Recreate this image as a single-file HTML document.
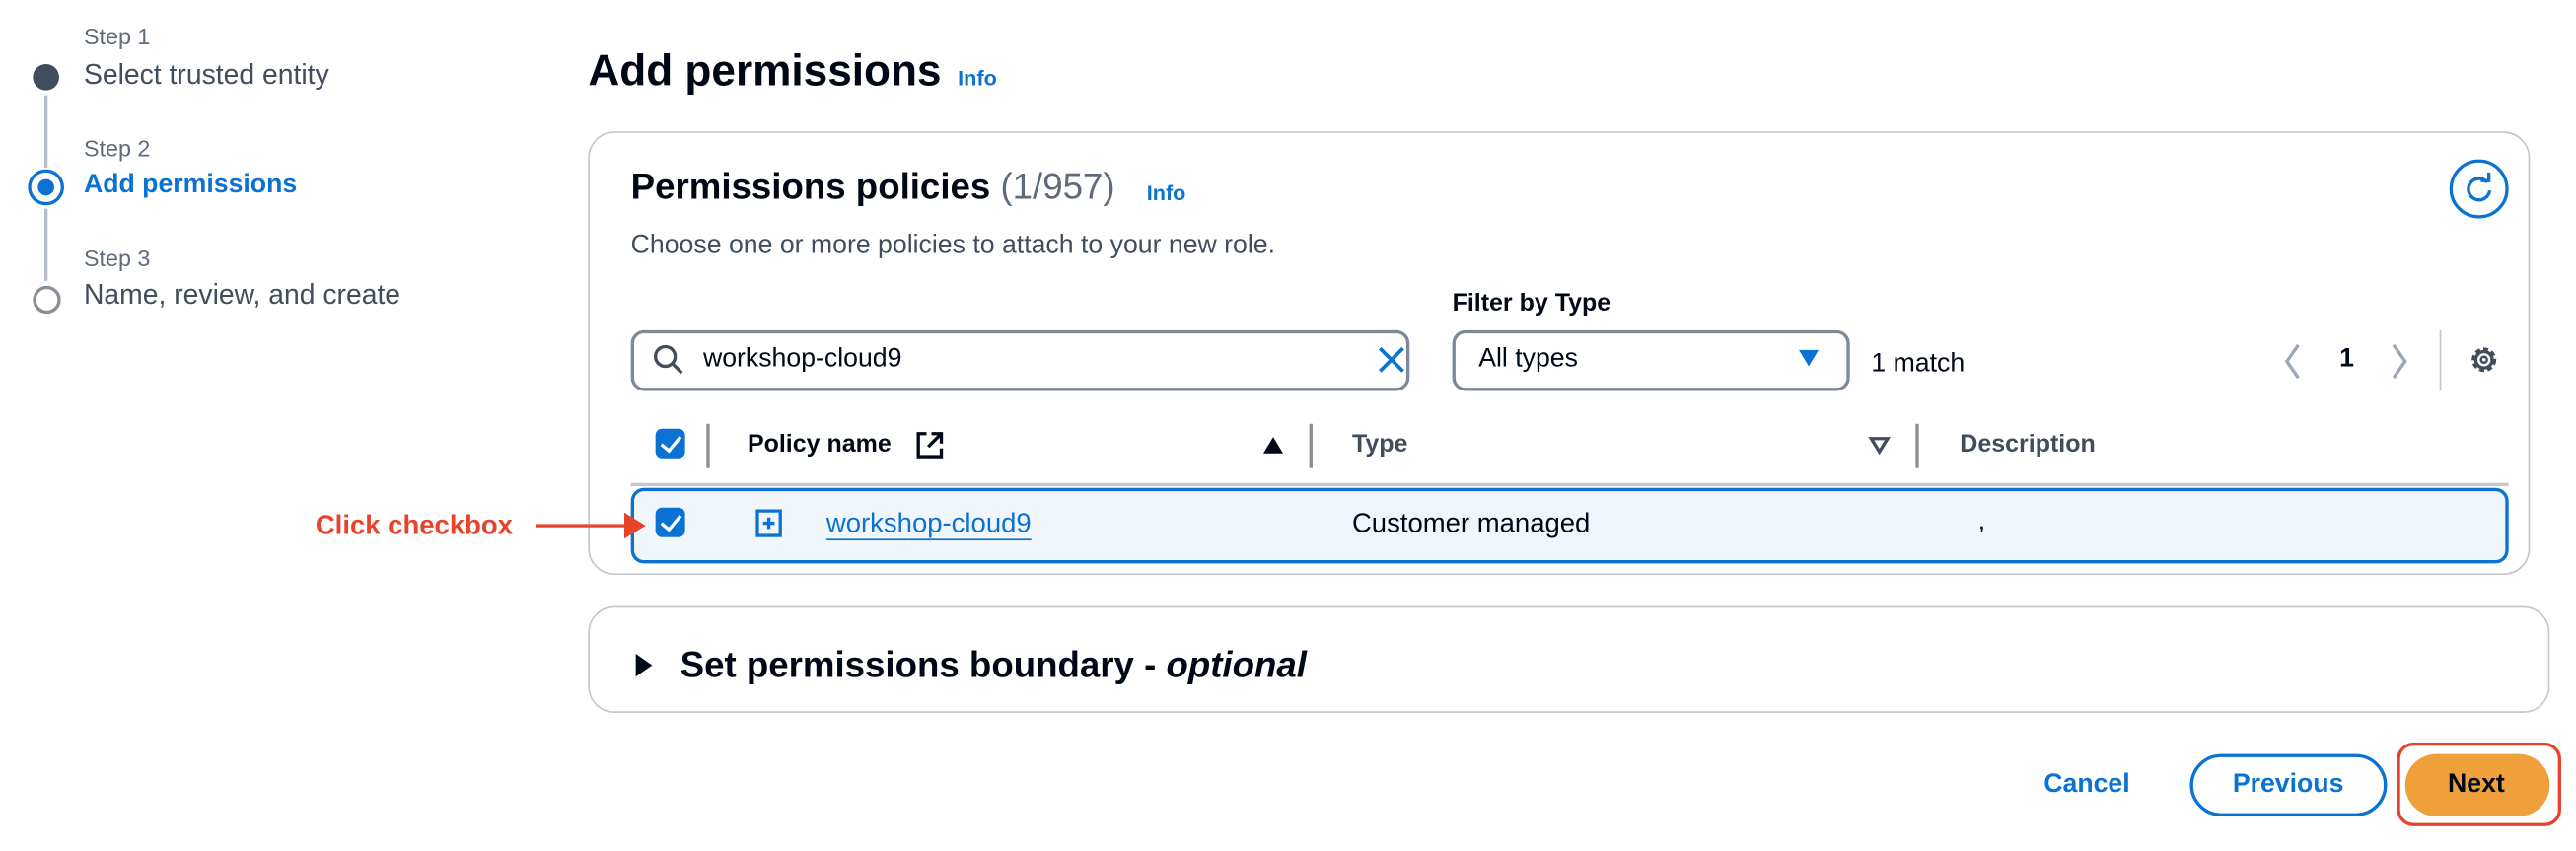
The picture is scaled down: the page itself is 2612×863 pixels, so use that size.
<!DOCTYPE html>
<html><head><meta charset="utf-8"><style>
html,body{margin:0;padding:0;background:#fff;width:2612px;height:862px;overflow:hidden}
#s{position:absolute;left:0;top:0;width:1568px;height:518px;transform:scale(1.6658);transform-origin:0 0;font-family:"Liberation Sans",Arial,sans-serif;color:#000716}
.a{position:absolute;white-space:nowrap}
.g{color:#5f6b7a}
.b{font-weight:bold}
.blue{color:#0972d3}
.cb{position:absolute;width:18px;height:18px;border-radius:4px;background:#0972d3}
.cb:after{content:"";position:absolute;left:6px;top:2px;width:5px;height:10px;border:solid #fff;border-width:0 2px 2px 0;transform:rotate(40deg)}
.vd{position:absolute;width:2px;background:#8c8c94}
</style></head><body><div id="s">
<div class="a g" style="left:51px;top:14px;font-size:14px">Step 1</div>
<div class="a" style="left:51px;top:36px;font-size:17px;color:#414d5c">Select trusted entity</div>
<div class="a" style="left:20px;top:39px;width:16px;height:16px;border-radius:50%;background:#414d5c"></div>
<div class="a" style="left:27px;top:58px;width:2px;height:44px;background:#b6bec9"></div>
<div class="a g" style="left:51px;top:82px;font-size:14px">Step 2</div>
<div class="a b blue" style="left:51px;top:104px;font-size:16px">Add permissions</div>
<div class="a" style="left:17px;top:103px;width:18px;height:18px;border-radius:50%;border:2px solid #0972d3"></div>
<div class="a" style="left:23px;top:109px;width:10px;height:10px;border-radius:50%;background:#0972d3"></div>
<div class="a" style="left:27px;top:127px;width:2px;height:44px;background:#b6bec9"></div>
<div class="a g" style="left:51px;top:149px;font-size:14px">Step 3</div>
<div class="a" style="left:51px;top:170px;font-size:17px;color:#414d5c">Name, review, and create</div>
<div class="a" style="left:20px;top:174px;width:13px;height:13px;border-radius:50%;border:2px solid #8c8c94"></div>
<div class="a b" style="left:358px;top:28px;font-size:26.5px">Add permissions</div>
<div class="a b blue" style="left:583px;top:40px;font-size:13px">Info</div>
<div class="a" style="left:358px;top:80px;width:1180px;height:268px;border:1px solid #c6c6cd;border-radius:16px"></div>
<div class="a b" style="left:384px;top:101px;font-size:22px">Permissions policies <span style="font-weight:normal;color:#5f6b7a">(1/957)</span></div>
<div class="a b blue" style="left:698px;top:110px;font-size:13px">Info</div>
<div class="a" style="left:1491px;top:97px;width:32px;height:32px;border-radius:50%;border:2px solid #0972d3"></div>
<svg class="a" style="left:1496px;top:102px" width="26" height="26" viewBox="0 0 26 26"><path d="M18 9 A6.5 6.5 0 1 0 19.5 14" fill="none" stroke="#0972d3" stroke-width="2"/><path d="M14 8 L19 8 L19 3" fill="none" stroke="#0972d3" stroke-width="2"/></svg>
<div class="a" style="left:384px;top:141px;font-size:16px;color:#414d5c">Choose one or more policies to attach to your new role.</div>
<div class="a b" style="left:884px;top:176px;font-size:15px">Filter by Type</div>
<div class="a" style="left:384px;top:201px;width:470px;height:33px;border:2px solid #7d8998;border-radius:8px"></div>
<svg class="a" style="left:397px;top:209px" width="20" height="20"><circle cx="8" cy="8" r="6" fill="none" stroke="#414d5c" stroke-width="2"/><path d="M12.5 12.5 L18 18" stroke="#414d5c" stroke-width="2"/></svg>
<div class="a" style="left:428px;top:210px;font-size:16px">workshop-cloud9</div>
<svg class="a" style="left:838px;top:210px" width="18" height="18"><path d="M2 2L16 16M16 2L2 16" stroke="#0972d3" stroke-width="2.2"/></svg>
<div class="a" style="left:884px;top:201px;width:238px;height:33px;border:2px solid #7d8998;border-radius:8px"></div>
<div class="a" style="left:900px;top:210px;font-size:16px">All types</div>
<svg class="a" style="left:1094px;top:212px" width="14" height="12"><path d="M1 1H13L7 11Z" fill="#0972d3"/></svg>
<div class="a" style="left:1139px;top:213px;font-size:16px">1 match</div>
<svg class="a" style="left:1388px;top:208px" width="14" height="24"><path d="M11 2L4 12L11 22" fill="none" stroke="#9ba7b6" stroke-width="2"/></svg>
<div class="a b" style="left:1424px;top:210px;font-size:16px">1</div>
<svg class="a" style="left:1454px;top:208px" width="14" height="24"><path d="M3 2L10 12L3 22" fill="none" stroke="#9ba7b6" stroke-width="2"/></svg>
<div class="a" style="left:1485px;top:201px;width:1px;height:37px;background:#c6c6cd"></div>
<svg class="a" style="left:1502px;top:209px" width="20" height="20" viewBox="0 0 20 20"><circle cx="10" cy="10" r="6.5" fill="none" stroke="#414d5c" stroke-width="2" stroke-dasharray="3 2"/><circle cx="10" cy="10" r="5" fill="none" stroke="#414d5c" stroke-width="2"/><circle cx="10" cy="10" r="1.8" fill="none" stroke="#414d5c" stroke-width="1.5"/></svg>
<div class="cb" style="left:399px;top:261px"></div>
<div class="vd" style="left:430px;top:258px;height:27px"></div>
<div class="a b" style="left:455px;top:262px;font-size:15px">Policy name</div>
<svg class="a" style="left:557px;top:262px" width="18" height="18"><path d="M7 2H2V16H16V11" fill="none" stroke="#000716" stroke-width="2"/><path d="M10 2H16V8M16 2L8 10" fill="none" stroke="#000716" stroke-width="2"/></svg>
<svg class="a" style="left:768px;top:265px" width="14" height="12"><path d="M7 1L13 11H1Z" fill="#000716"/></svg>
<div class="vd" style="left:797px;top:258px;height:27px"></div>
<div class="a b" style="left:823px;top:262px;font-size:15px;color:#414d5c">Type</div>
<svg class="a" style="left:1137px;top:265px" width="14" height="12"><path d="M2 2H12L7 10Z" fill="none" stroke="#414d5c" stroke-width="2"/></svg>
<div class="vd" style="left:1166px;top:258px;height:27px"></div>
<div class="a b" style="left:1193px;top:262px;font-size:15px;color:#414d5c">Description</div>
<div class="a" style="left:384px;top:294px;width:1143px;height:2px;background:#c6c6cd"></div>
<div class="a" style="left:384px;top:297px;width:1139px;height:42px;border:2px solid #0972d3;border-radius:8px;background:#f0f6fc"></div>
<div class="cb" style="left:399px;top:309px"></div>
<svg class="a" style="left:460px;top:310px" width="16" height="18"><rect x="1" y="1" width="14" height="15" fill="none" stroke="#0972d3" stroke-width="2"/><path d="M8 5V12M4.5 8.5H11.5" stroke="#0972d3" stroke-width="2"/></svg>
<div class="a blue" style="left:503px;top:310px;font-size:16.5px;text-decoration:underline;text-underline-offset:4px">workshop-cloud9</div>
<div class="a" style="left:823px;top:310px;font-size:16.5px">Customer managed</div>
<div class="a" style="left:1204px;top:309px;font-size:16px">,</div>
<div class="a b" style="left:192px;top:311px;font-size:16.5px;color:#e8432a">Click checkbox</div>
<div class="a" style="left:326px;top:319px;width:58px;height:2px;background:#e8432a"></div>
<svg class="a" style="left:380px;top:312px" width="14" height="16"><path d="M0 0L13 8L0 16Z" fill="#e8432a"/></svg>
<div class="a" style="left:358px;top:369px;width:1192px;height:63px;border:1px solid #c6c6cd;border-radius:16px"></div>
<svg class="a" style="left:386px;top:397px" width="12" height="16"><path d="M1 1L11 8L1 15Z" fill="#000716"/></svg>
<div class="a b" style="left:414px;top:392px;font-size:22px">Set permissions boundary - <i>optional</i></div>
<div class="a b blue" style="left:1244px;top:469px;font-size:16px">Cancel</div>
<div class="a" style="left:1333px;top:459px;width:116px;height:34px;border:2px solid #0972d3;border-radius:20px"></div>
<div class="a b blue" style="left:1359px;top:469px;font-size:16px">Previous</div>
<div class="a" style="left:1459px;top:452px;width:96px;height:47px;border:2px solid #e8432a;border-radius:10px"></div>
<div class="a" style="left:1464px;top:459px;width:88px;height:38px;background:#f0a03b;border-radius:20px"></div>
<div class="a b" style="left:1490px;top:469px;font-size:16px">Next</div>
</div></body></html>
